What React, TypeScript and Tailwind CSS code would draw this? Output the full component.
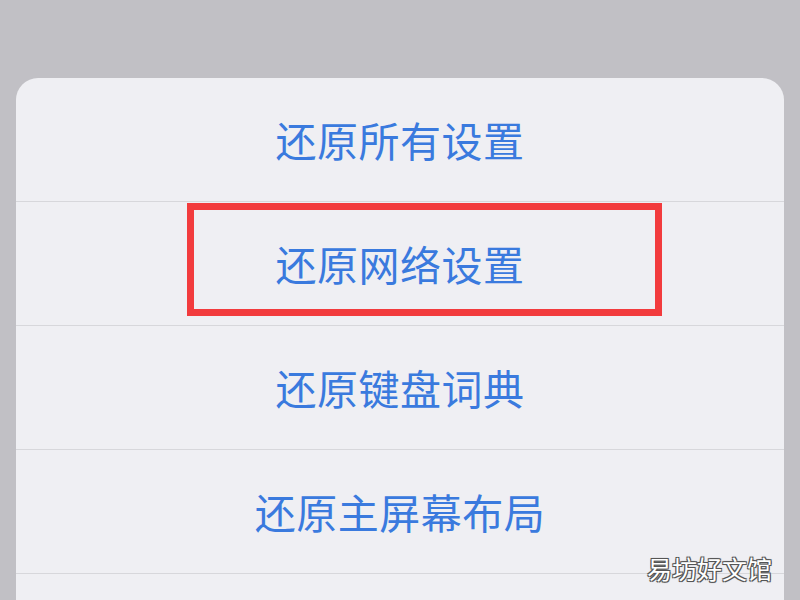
import React from 'react';

const items = ['还原所有设置', '还原网络设置', '还原键盘词典', '还原主屏幕布局'];

export default function App() {
  return (
    <div
      className="relative w-[800px] h-[600px] overflow-hidden bg-[#c1c0c5] pt-[78px] px-4"
      style={{ fontFamily: '"Noto Sans CJK SC", "Noto Sans", sans-serif' }}
    >
      <div className="rounded-t-[22px] bg-[#efeff3] h-[560px]">
        {items.map((label, i) => (
          <div
            key={label}
            className="relative h-[124px] flex items-center justify-center border-b border-[#d7d7db]"
          >
            <span className="text-[41px] leading-none tracking-[0.5px] text-[#3a7ade]">{label}</span>
            {i === 1 && (
              <div className="absolute top-[1px] left-[171px] w-[475px] h-[113px] border-[7px] border-[#f23b3d]" />
            )}
          </div>
        ))}
      </div>

      {/* watermark */}
      <div
        className="absolute right-[28px] bottom-[19px] text-[25px] leading-none text-white [text-shadow:-1px_-1px_0_#555,1px_-1px_0_#555,-1px_1px_0_#555,1px_1px_0_#555,0_0_2px_#333]"
      >
        易坊好文馆
      </div>
    </div>
  );
}
